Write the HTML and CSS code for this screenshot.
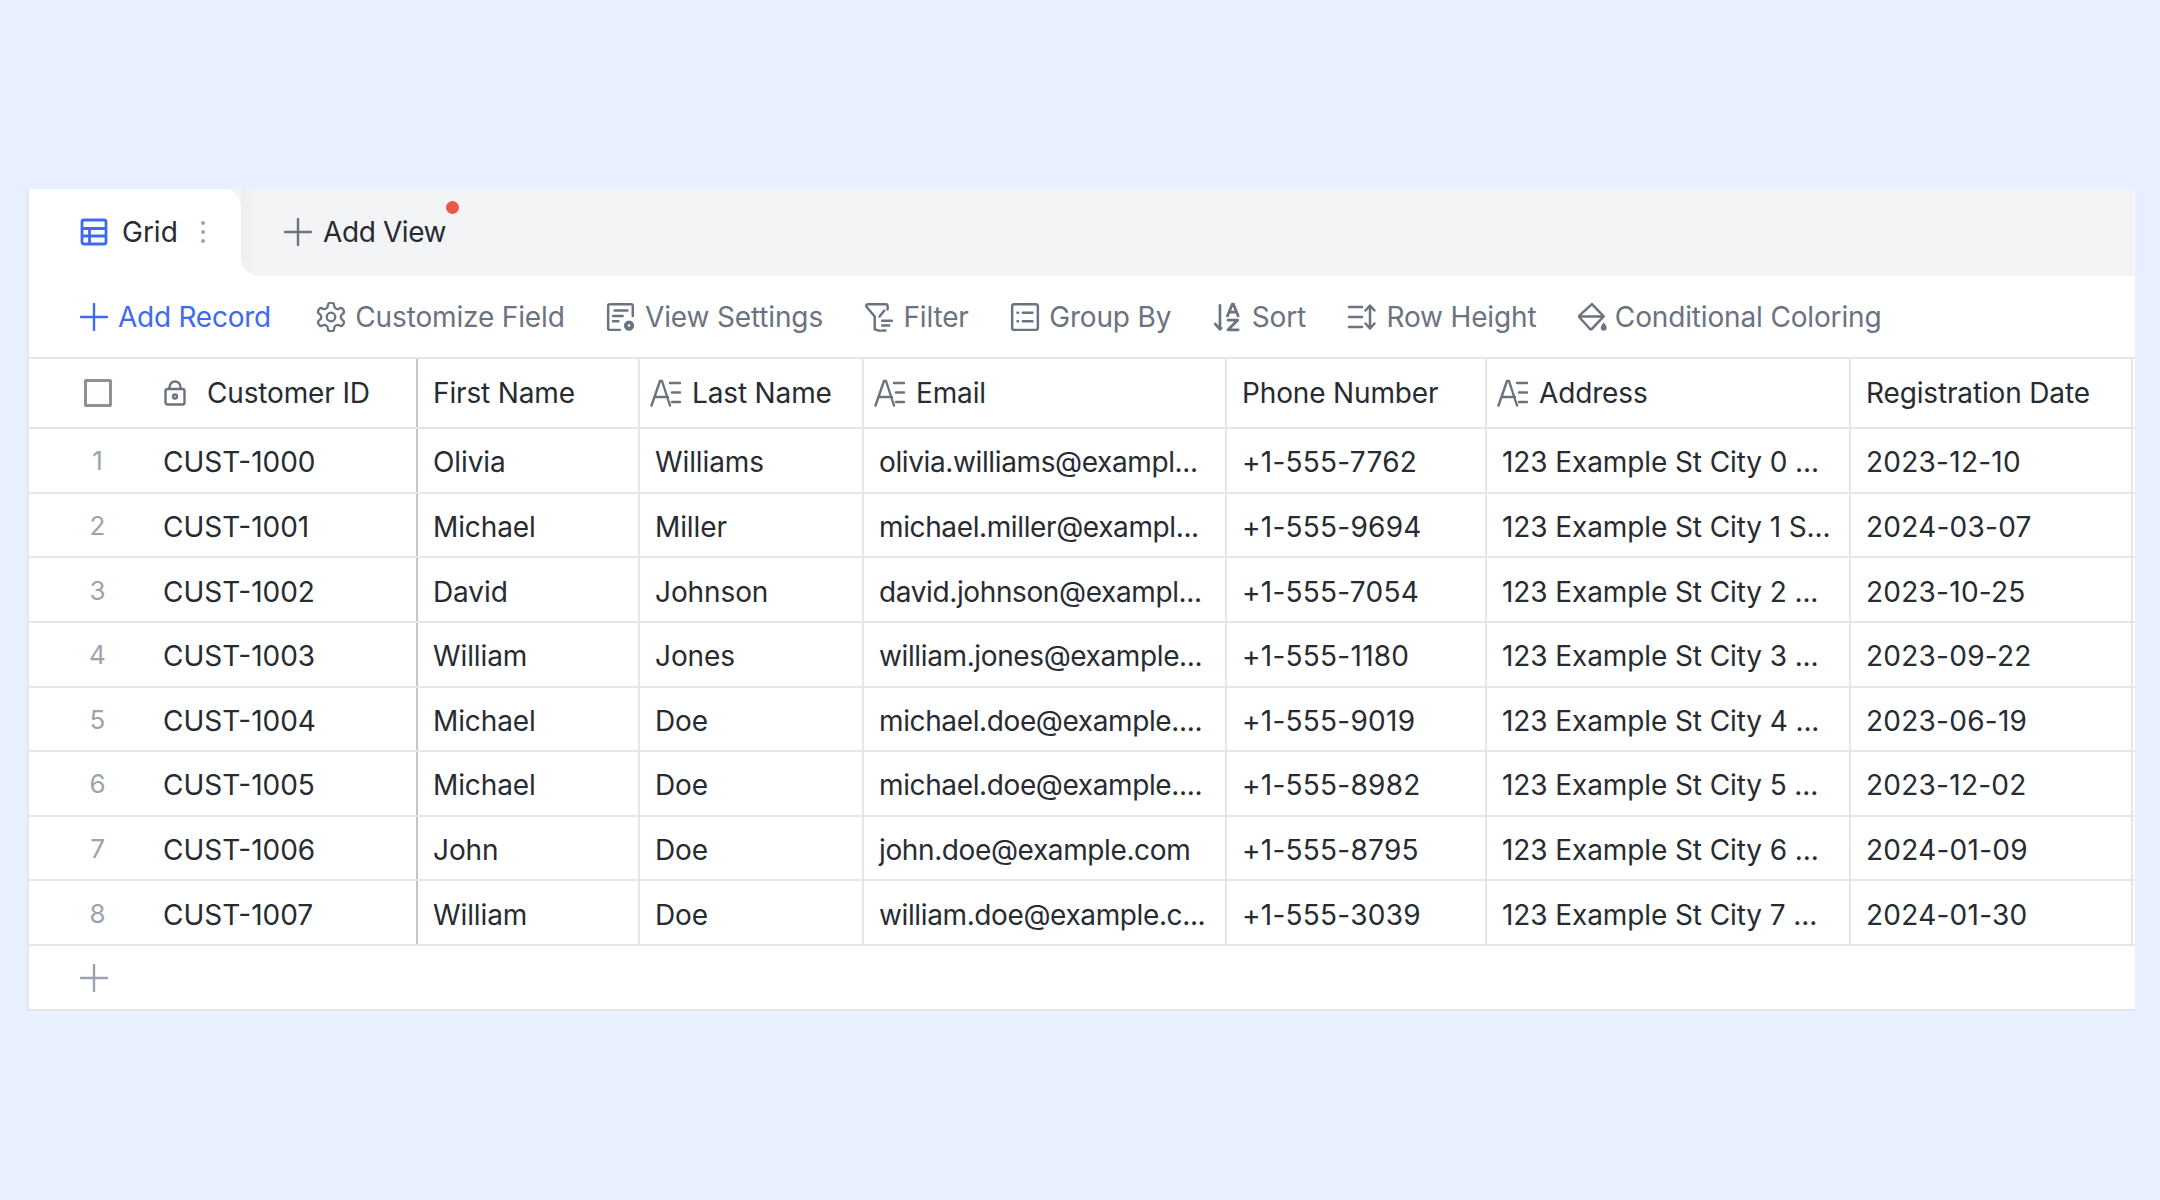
FILE: index.html
```html
<!DOCTYPE html>
<html>
<head>
  <title>Customers Grid</title>
  <link rel="stylesheet" href="styles.css">
</head>
<body>
  <svg class="sprite" aria-hidden="true">
    <symbol id="i-text" viewBox="0 0 32 28">
      <path d="M1.500 26.500 10 2h2l8 24.500M5 18h13M20 4h10M22 13.500h8M22 23h8" fill="none" stroke="currentColor" stroke-width="2.400" stroke-linecap="round" stroke-linejoin="round"/>
    </symbol>
    <symbol id="i-plus" viewBox="0 0 28 28">
      <path d="M14 1v26M1 14h26" fill="none" stroke="currentColor" stroke-width="2.400" stroke-linecap="round"/>
    </symbol>
  </svg>

  <div class="card">
    <!-- Tabs -->
    <div class="tabs">
      <div class="tab-slot">
        <div class="tab">
          <svg class="icon-grid" viewBox="0 0 28 28" fill="none" stroke="currentColor" stroke-width="2.800" stroke-linejoin="round">
            <rect x="2" y="2" width="24" height="24" rx="2"/>
            <path d="M2 10.500h24M2 18h24M9.500 10.500V26"/>
          </svg>
          <span class="tab-name">Grid</span>
          <span class="kebab"><i></i><i></i><i></i></span>
        </div>
      </div>
      <div class="tab-rest">
        <div class="add-view">
          <svg class="icon-plus"><use href="#i-plus"/></svg>
          <span>Add View</span>
          <span class="dot"></span>
        </div>
      </div>
    </div>

    <!-- Toolbar -->
    <div class="toolbar">
      <div class="tool tool-primary">
        <svg class="icon-plus"><use href="#i-plus"/></svg>
        <span>Add Record</span>
      </div>
      <div class="tool">
        <svg class="icon" viewBox="1.500 1.500 21 21" fill="none" stroke="currentColor" stroke-width="1.600" stroke-linejoin="round">
          <path d="M12.220 2h-.44a2 2 0 0 0-2 2v.18a2 2 0 0 1-1 1.730l-.43.25a2 2 0 0 1-2 0l-.15-.08a2 2 0 0 0-2.730.73l-.22.38a2 2 0 0 0 .73 2.730l.15.1a2 2 0 0 1 1 1.720v.51a2 2 0 0 1-1 1.740l-.15.09a2 2 0 0 0-.73 2.730l.22.38a2 2 0 0 0 2.730.73l.15-.08a2 2 0 0 1 2 0l.43.25a2 2 0 0 1 1 1.730V20a2 2 0 0 0 2 2h.44a2 2 0 0 0 2-2v-.18a2 2 0 0 1 1-1.730l.43-.25a2 2 0 0 1 2 0l.15.08a2 2 0 0 0 2.730-.73l.22-.39a2 2 0 0 0-.73-2.730l-.15-.08a2 2 0 0 1-1-1.740v-.5a2 2 0 0 1 1-1.740l.15-.09a2 2 0 0 0 .73-2.730l-.22-.38a2 2 0 0 0-2.730-.73l-.15.08a2 2 0 0 1-2 0l-.43-.25a2 2 0 0 1-1-1.730V4a2 2 0 0 0-2-2z"/>
          <circle cx="12" cy="12" r="3"/>
        </svg>
        <span>Customize Field</span>
      </div>
      <div class="tool">
        <svg class="icon" viewBox="0 0 28 28" fill="none" stroke="currentColor" stroke-width="2.300" stroke-linecap="round" stroke-linejoin="round">
          <path d="M13 26H3.500A1.500 1.500 0 0 1 2 24.500v-21A1.500 1.500 0 0 1 3.500 2h20A1.500 1.500 0 0 1 25 3.500V13"/>
          <path d="M8 8h12M6.500 13h9M6.500 18h5"/>
          <circle cx="21.500" cy="22" r="3" stroke-width="3.600"/>
        </svg>
        <span>View Settings</span>
      </div>
      <div class="tool">
        <svg class="icon" viewBox="0 0 28 28" fill="none" stroke="currentColor" stroke-width="2.300" stroke-linecap="round" stroke-linejoin="round">
          <path d="M22 7V3.500A1.500 1.500 0 0 0 20.500 2H3.500A1.500 1.500 0 0 0 2.300 4.400L10 13.500V25.500l5 1.500"/>
          <path d="M19 8 14.500 13.500M17 17.500h9M17 22h6.500M17 26.500h3"/>
        </svg>
        <span>Filter</span>
      </div>
      <div class="tool">
        <svg class="icon" viewBox="0 0 28 28" fill="none" stroke="currentColor" stroke-width="2.300" stroke-linecap="round" stroke-linejoin="round">
          <rect x="2" y="2" width="24" height="24" rx="2"/>
          <path d="M12 10h9M12 18h9M7 10h.5M7 18h.5"/>
        </svg>
        <span>Group By</span>
      </div>
      <div class="tool">
        <svg class="icon" viewBox="0 0 28 28" fill="none" stroke="currentColor" stroke-width="2.500" stroke-linecap="round" stroke-linejoin="round">
          <path d="M6.500 3v22M2 20.500l4.500 5 1-1"/>
          <path d="M13.500 13 18 2h1l4.500 11M15 9.500h7M14 17h9l-9 9h9.500" stroke-width="2.600"/>
        </svg>
        <span>Sort</span>
      </div>
      <div class="tool">
        <svg class="icon" viewBox="0 0 30 28" fill="none" stroke="currentColor" stroke-width="2.500" stroke-linecap="round" stroke-linejoin="round">
          <path d="M2 4h13M2 14h13M2 24h13"/>
          <path d="M23 3v22M18.500 7.500 23 2.500l4.500 5M18.500 20.500l4.500 5 4.500-5"/>
        </svg>
        <span>Row Height</span>
      </div>
      <div class="tool tool-tight">
        <svg class="icon" viewBox="0 0 28 28" fill="none" stroke="currentColor" stroke-width="2.300" stroke-linecap="round" stroke-linejoin="round">
          <path d="M13 2 24 13.500 13 25a1.500 1.500 0 0 1-2 0L1.500 14.500a1.500 1.500 0 0 1 0-2L13 2zM1.500 13.500H24"/>
          <path d="M24 19c-1.500 2.300-2.700 3.700-2.700 5a2.700 2.700 0 0 0 5.400 0c0-1.300-1.200-2.700-2.700-5z" fill="currentColor" stroke="none"/>
        </svg>
        <span>Conditional Coloring</span>
      </div>
    </div>

    <!-- Grid -->
    <div class="grid">
      <div class="row row-head">
        <div class="cell cell-first">
          <span class="num"><span class="checkbox"></span></span>
          <svg class="icon-lock" viewBox="0 0 22 26" fill="none" stroke="currentColor" stroke-width="2.400" stroke-linejoin="round">
            <rect x="1.500" y="9" width="19" height="15.500" rx="2"/>
            <path d="M5.500 9V7a5.500 5.500 0 0 1 11 0v2"/>
            <circle cx="11" cy="16.500" r="2"/>
          </svg>
          <span>Customer ID</span>
        </div>
        <div class="cell">First Name</div>
        <div class="cell cell-icon"><svg class="icon-text"><use href="#i-text"/></svg>Last Name</div>
        <div class="cell cell-icon"><svg class="icon-text"><use href="#i-text"/></svg>Email</div>
        <div class="cell">Phone Number</div>
        <div class="cell cell-icon"><svg class="icon-text"><use href="#i-text"/></svg>Address</div>
        <div class="cell">Registration Date</div>
      </div>

      <div class="row">
        <div class="cell cell-first"><span class="num">1</span><span>CUST-1000</span></div>
        <div class="cell cell-name">Olivia</div>
        <div class="cell cell-name">Williams</div>
        <div class="cell cell-email">olivia.williams@exampl...</div>
        <div class="cell cell-digits">+1-555-7762</div>
        <div class="cell cell-name">123 Example St City 0 ...</div>
        <div class="cell cell-digits">2023-12-10</div>
      </div>
      <div class="row">
        <div class="cell cell-first"><span class="num">2</span><span>CUST-1001</span></div>
        <div class="cell cell-name">Michael</div>
        <div class="cell cell-name">Miller</div>
        <div class="cell cell-email">michael.miller@exampl...</div>
        <div class="cell cell-digits">+1-555-9694</div>
        <div class="cell cell-name">123 Example St City 1 S...</div>
        <div class="cell cell-digits">2024-03-07</div>
      </div>
      <div class="row">
        <div class="cell cell-first"><span class="num">3</span><span>CUST-1002</span></div>
        <div class="cell cell-name">David</div>
        <div class="cell cell-name">Johnson</div>
        <div class="cell cell-email">david.johnson@exampl...</div>
        <div class="cell cell-digits">+1-555-7054</div>
        <div class="cell cell-name">123 Example St City 2 ...</div>
        <div class="cell cell-digits">2023-10-25</div>
      </div>
      <div class="row">
        <div class="cell cell-first"><span class="num">4</span><span>CUST-1003</span></div>
        <div class="cell cell-name">William</div>
        <div class="cell cell-name">Jones</div>
        <div class="cell cell-email">william.jones@example...</div>
        <div class="cell cell-digits">+1-555-1180</div>
        <div class="cell cell-name">123 Example St City 3 ...</div>
        <div class="cell cell-digits">2023-09-22</div>
      </div>
      <div class="row">
        <div class="cell cell-first"><span class="num">5</span><span>CUST-1004</span></div>
        <div class="cell cell-name">Michael</div>
        <div class="cell cell-name">Doe</div>
        <div class="cell cell-email">michael.doe@example....</div>
        <div class="cell cell-digits">+1-555-9019</div>
        <div class="cell cell-name">123 Example St City 4 ...</div>
        <div class="cell cell-digits">2023-06-19</div>
      </div>
      <div class="row">
        <div class="cell cell-first"><span class="num">6</span><span>CUST-1005</span></div>
        <div class="cell cell-name">Michael</div>
        <div class="cell cell-name">Doe</div>
        <div class="cell cell-email">michael.doe@example....</div>
        <div class="cell cell-digits">+1-555-8982</div>
        <div class="cell cell-name">123 Example St City 5 ...</div>
        <div class="cell cell-digits">2023-12-02</div>
      </div>
      <div class="row">
        <div class="cell cell-first"><span class="num">7</span><span>CUST-1006</span></div>
        <div class="cell cell-name">John</div>
        <div class="cell cell-name">Doe</div>
        <div class="cell cell-email">john.doe@example.com</div>
        <div class="cell cell-digits">+1-555-8795</div>
        <div class="cell cell-name">123 Example St City 6 ...</div>
        <div class="cell cell-digits">2024-01-09</div>
      </div>
      <div class="row">
        <div class="cell cell-first"><span class="num">8</span><span>CUST-1007</span></div>
        <div class="cell cell-name">William</div>
        <div class="cell cell-name">Doe</div>
        <div class="cell cell-email">william.doe@example.c...</div>
        <div class="cell cell-digits">+1-555-3039</div>
        <div class="cell cell-name">123 Example St City 7 ...</div>
        <div class="cell cell-digits">2024-01-30</div>
      </div>

      <div class="add-row">
        <svg class="icon-plus"><use href="#i-plus"/></svg>
      </div>
    </div>
  </div>
</body>
</html>
```

FILE: styles.css
```css
/* Page */
body {
  margin: 0;
  background-color: #e8effe;
  font-family: Inter, "Liberation Sans", sans-serif;
  font-size: 28px;
  color: #272b32;
}

.sprite {
  display: none;
}

.card {
  width: 2108px;
  margin: 189px 0 0 27px;
  box-sizing: border-box;
  background-color: #fff;
  border-left: 2px solid #e4e6ea;
  border-bottom: 2px solid #e4e6ea;
}

/* Tabs */
.tabs {
  display: flex;
  height: 87px;
  background-color: #fff;
}

.tab-slot {
  width: 212px;
  background-color: #f3f4f6;
}

.tab {
  display: flex;
  align-items: center;
  height: 100%;
  padding: 0 0 2px 51px;
  box-sizing: border-box;
  background-color: #fff;
  border-top-right-radius: 18px;
}

.icon-grid {
  width: 28px;
  height: 28px;
  color: #3f6af0;
  margin-right: 14px;
}

.kebab {
  display: flex;
  flex-direction: column;
  gap: 5px;
  margin-left: 23px;
}

.kebab i {
  width: 4px;
  height: 4px;
  border-radius: 50%;
  background-color: #9ca3af;
}

.tab-rest {
  flex: 1;
  display: flex;
  align-items: center;
  padding: 0 0 2px 43px;
  background: linear-gradient(to right, #eceef1, #f3f4f6 14px);
  border-bottom-left-radius: 18px;
}

.add-view {
  position: relative;
  display: flex;
  align-items: center;
  gap: 11px;
  letter-spacing: -0.4px;
}

.dot {
  position: absolute;
  top: -14px;
  right: -13px;
  width: 13px;
  height: 13px;
  border-radius: 50%;
  background-color: #e8594a;
}

.icon-plus {
  display: block;
  width: 28px;
  height: 28px;
  color: #6b7280;
}

/* Toolbar */
.toolbar {
  display: flex;
  align-items: center;
  gap: 41.4px;
  height: 81px;
  padding-left: 51px;
  color: #6b7280;
  letter-spacing: -0.15px;
}

.tool {
  display: flex;
  align-items: center;
  gap: 9px;
}

.tool-primary {
  gap: 10px;
  margin-right: 4px;
  color: #3f6af0;
  letter-spacing: -0.25px;
}

.tool-primary .icon-plus {
  color: #3f6af0;
}

.tool-tight {
  gap: 7px;
}

.icon {
  display: block;
  width: 30px;
  height: 30px;
}

/* Grid */
.grid {
  border-top: 2px solid #e4e6ea;
}

.row {
  display: grid;
  grid-template-columns: 389px 222px 224px 363px 260px 364px 282px 1fr;
  height: 64.625px;
  box-sizing: border-box;
  border-bottom: 2px solid #e4e6ea;
}

.row-head {
  height: 70px;
  letter-spacing: -0.15px;
}

.cell {
  display: flex;
  align-items: center;
  padding-left: 15px;
  border-right: 2px solid #e4e6ea;
  white-space: nowrap;
  overflow: hidden;
}

.row:not(.row-head) .cell {
  padding-top: 4px;
}

.cell-first {
  padding-left: 0;
  border-right-color: #c4c6cb;
}

.row .cell-first {
  padding-left: 0;
}

.cell-icon {
  padding-left: 10px;
}

.cell-name {
  letter-spacing: -0.1px;
}

.cell-email {
  letter-spacing: -0.38px;
}

.cell-digits {
  letter-spacing: 0.25px;
}

.num {
  flex: none;
  width: 137px;
  margin: -3px -3px 0 0;
  text-align: center;
  color: #9ca3af;
  font-size: 26px;
}

.row-head .num {
  display: flex;
  justify-content: center;
  margin: 0;
}

.checkbox {
  width: 28px;
  height: 28px;
  box-sizing: border-box;
  border: 3px solid #8b9099;
  border-radius: 2px;
}

.icon-lock {
  flex: none;
  width: 22px;
  height: 26px;
  margin-left: -2px;
  margin-right: 21px;
  color: #6b7280;
}

.icon-text {
  flex: none;
  width: 32px;
  height: 28px;
  margin-right: 10px;
  color: #6b7280;
}

.add-row {
  display: flex;
  align-items: center;
  height: 63px;
  padding-left: 51px;
}

.add-row .icon-plus {
  color: #9ca3af;
}
```
